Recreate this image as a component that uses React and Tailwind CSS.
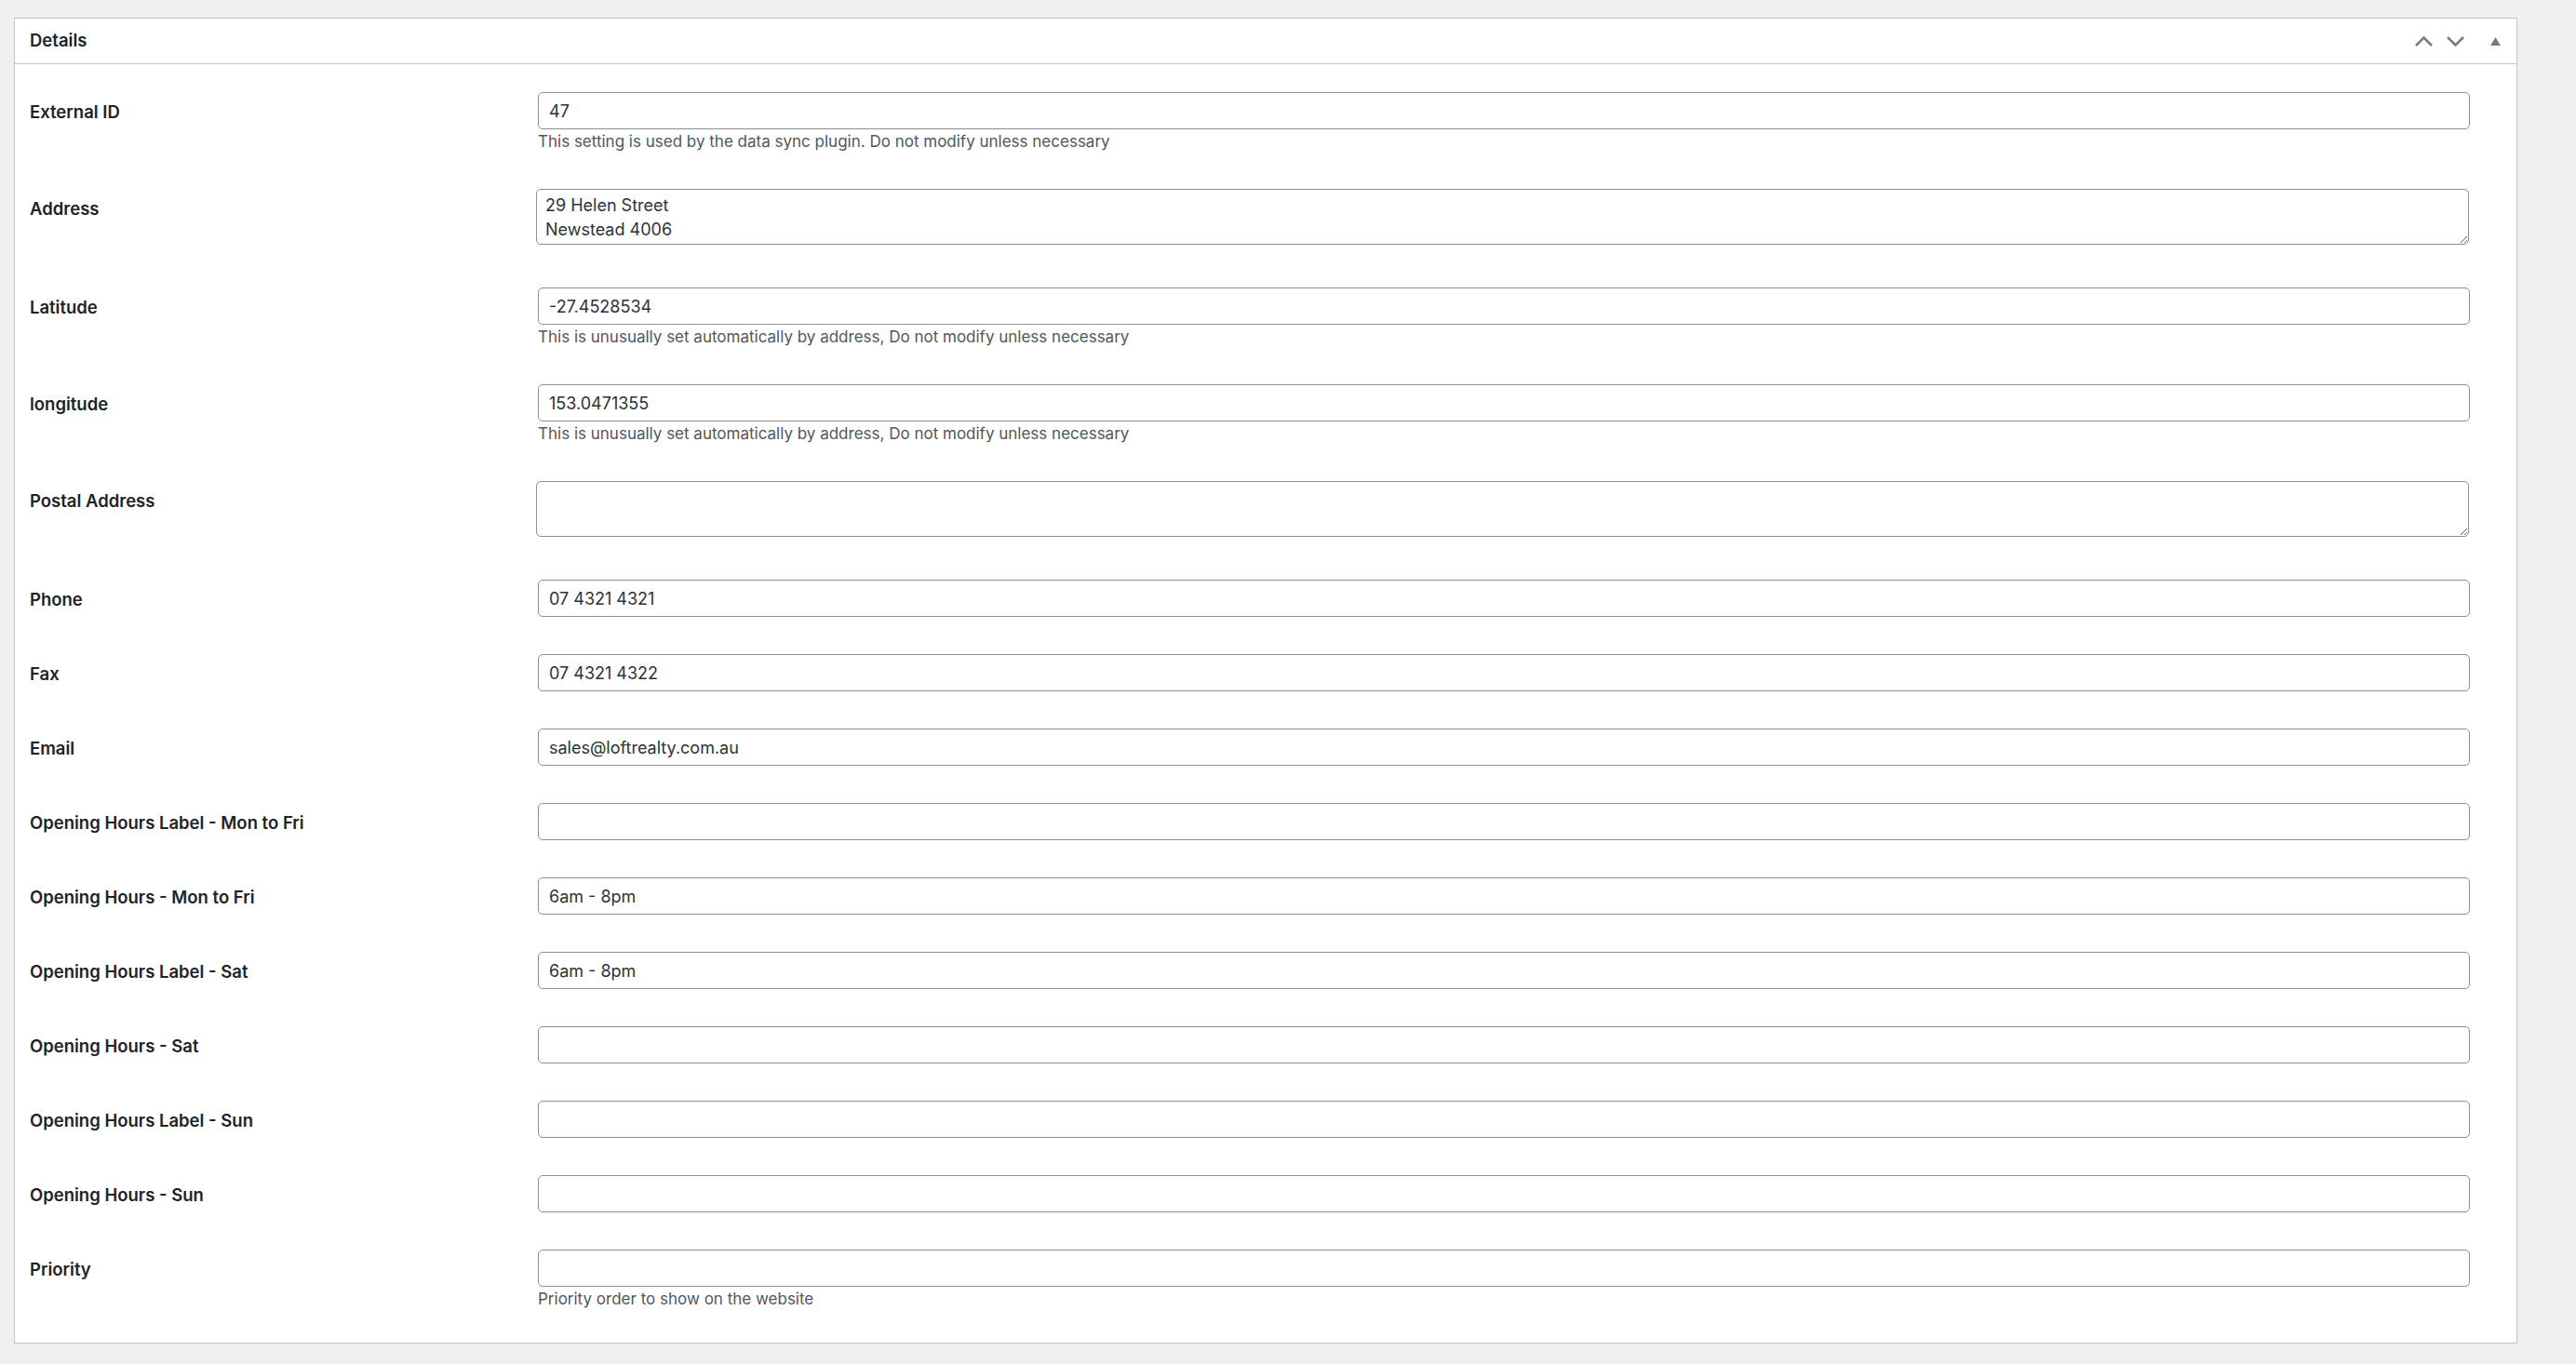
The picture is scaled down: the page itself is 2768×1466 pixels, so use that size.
import { useState } from "react";

const fields = [
  { label: "External ID", value: "47", help: "This setting is used by the data sync plugin. Do not modify unless necessary" },
  { label: "Address", value: "29 Helen Street\nNewstead 4006", textarea: true },
  { label: "Latitude", value: "-27.4528534", help: "This is unusually set automatically by address, Do not modify unless necessary" },
  { label: "longitude", value: "153.0471355", help: "This is unusually set automatically by address, Do not modify unless necessary" },
  { label: "Postal Address", value: "", textarea: true },
  { label: "Phone", value: "07 4321 4321" },
  { label: "Fax", value: "07 4321 4322" },
  { label: "Email", value: "sales@loftrealty.com.au" },
  { label: "Opening Hours Label - Mon to Fri", value: "" },
  { label: "Opening Hours - Mon to Fri", value: "6am - 8pm" },
  { label: "Opening Hours Label - Sat", value: "6am - 8pm" },
  { label: "Opening Hours - Sat", value: "" },
  { label: "Opening Hours Label - Sun", value: "" },
  { label: "Opening Hours - Sun", value: "" },
  { label: "Priority", value: "", help: "Priority order to show on the website" },
];

function Field({ field }) {
  const [value, setValue] = useState(field.value);

  return (
    <div className={`flex pl-[16px] pt-[20px] ${field.textarea ? "pb-[26px]" : "pb-[20px]"}`}>
      <div className="w-[546px] shrink-0 pt-[9px] text-[18.5px] leading-[24px] font-semibold text-[#1d2327]">
        {field.label}
      </div>
      <div className="w-[2076px]">
        {field.textarea ? (
          <textarea
            value={value}
            onChange={(e) => setValue(e.target.value)}
            className="block w-[2077px] -ml-[2px] h-[60px] rounded-[5px] border border-[#8c8f94] bg-white pt-[4px] px-[9px] text-[18px] leading-[26px] text-[#2c3338] outline-none"
          />
        ) : (
          <input
            type="text"
            value={value}
            onChange={(e) => setValue(e.target.value)}
            className="block w-full h-[40px] rounded-[5px] border border-[#8c8f94] bg-white px-[11px] text-[18px] text-[#2c3338] outline-none"
          />
        )}
        {field.help && (
          <p className="mt-[3px] text-[17px] leading-[21px] text-[#50575e]">{field.help}</p>
        )}
      </div>
    </div>
  );
}

export default function App() {
  return (
    <div
      className="min-h-screen bg-[#f0f0f1] pt-[19px] pl-[15px] pr-[63px] pb-[21px]"
      style={{ fontFamily: "Inter, 'Liberation Sans', sans-serif" }}
    >
      <div className="border border-[#c3c4c7] bg-white shadow-[0_1px_1px_rgba(0,0,0,0.04)]">
        {/* header */}
        <div className="flex items-center justify-between h-[49px] border-b border-[#c3c4c7] pl-[16px] pr-[17px]">
          <h2 className="text-[18.5px] font-semibold text-[#1d2327]">Details</h2>
          <div className="flex items-center text-[#787c82]">
            <svg width="19" height="11" viewBox="0 0 19 11" fill="none" stroke="currentColor" strokeWidth="2.6">
              <polyline points="1,10 9.5,1.5 18,10" />
            </svg>
            <svg className="ml-[15px]" width="19" height="11" viewBox="0 0 19 11" fill="none" stroke="currentColor" strokeWidth="2.6">
              <polyline points="1,1 9.5,9.5 18,1" />
            </svg>
            <svg className="ml-[28px]" width="11" height="9" viewBox="0 0 11 9" fill="currentColor">
              <polygon points="5.5,0 11,9 0,9" />
            </svg>
          </div>
        </div>

        <div className="pt-[10px] pb-[16px]">
          {fields.map((f) => (
            <Field key={f.label} field={f} />
          ))}
        </div>
      </div>
    </div>
  );
}
